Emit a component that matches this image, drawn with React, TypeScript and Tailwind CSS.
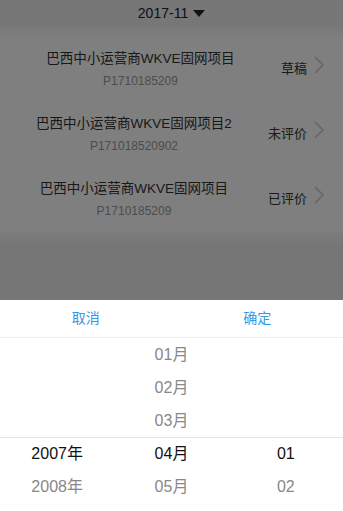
import React from "react";

const rows = [
  { title: "巴西中小运营商WKVE固网项目", id: "P1710185209", status: "草稿" },
  { title: "巴西中小运营商WKVE固网项目2", id: "P171018520902", status: "未评价" },
  { title: "巴西中小运营商WKVE固网项目", id: "P1710185209", status: "已评价" },
];

const months = ["01月", "02月", "03月", "04月", "05月"];

export default function App() {
  return (
    <div
      className="relative w-[343px] h-[511px] overflow-hidden bg-[#ededed]"
      style={{ fontFamily: '"Liberation Sans", "Noto Sans CJK SC", sans-serif' }}
    >
      {/* page */}
      <div className="h-[27px] flex items-center justify-center bg-[#efefef] text-[14px] text-[#222]">
        <span>2017-11</span>
        <svg width="12" height="7" viewBox="0 0 12 7" className="ml-[5px]">
          <polygon points="0,0 12,0 6,7" fill="#222" />
        </svg>
      </div>
      <div className="h-[10px] bg-gradient-to-b from-[#f2f2f2] to-[#fdfdfd]" />
      <div className="bg-white">
        {rows.map((r, i) => (
          <div key={i} className="h-[65px] flex items-center">
            <div className="flex-1 flex flex-col items-center">
              <div className="text-[13.5px] leading-[20px] text-[#333]">{r.title}</div>
              <div className="text-[12px] leading-[18px] mt-[3px] text-[#999]">{r.id}</div>
            </div>
            <div className="text-[13px] text-[#333] -mt-[1px]">{r.status}</div>
            <svg width="12" height="20" viewBox="0 0 12 20" className="ml-[6px] mr-[18px] -mt-[10px]">
              <polyline points="2,2 10,10 2,18" fill="none" stroke="#d2d2d2" strokeWidth="1.8" />
            </svg>
          </div>
        ))}
      </div>
      <div className="h-[12px] bg-gradient-to-b from-[#fbfbfb] to-[#eeeeee]" />

      {/* overlay */}
      <div className="absolute inset-0 bg-black/50" />

      {/* picker */}
      <div className="absolute left-0 right-0 bottom-0 h-[211px] bg-white">
        <div className="h-[38px] flex border-b border-[#eeeeee] text-[14px] text-[#3399e6]">
          <div className="flex-1 flex items-center justify-center">取消</div>
          <div className="flex-1 flex items-center justify-center">确定</div>
        </div>
        <div className="relative">
          <div className="absolute left-0 right-0 top-[99px] border-t border-[#e3e3e3]" />
          <div className="flex text-[16px]">
            <div className="flex-1 flex flex-col items-center">
              <div className="h-[99px]" />
              <div className="h-[33px] flex items-center text-[#111]">2007年</div>
              <div className="h-[33px] flex items-center text-[#888]">2008年</div>
            </div>
            <div className="flex-1 flex flex-col items-center">
              {months.map((m, i) => (
                <div key={m} className={`h-[33px] flex items-center ${i === 3 ? "text-[#111]" : "text-[#888]"}`}>
                  {m}
                </div>
              ))}
            </div>
            <div className="flex-1 flex flex-col items-center">
              <div className="h-[99px]" />
              <div className="h-[33px] flex items-center text-[#111]">01</div>
              <div className="h-[33px] flex items-center text-[#888]">02</div>
            </div>
          </div>
        </div>
      </div>
    </div>
  );
}
